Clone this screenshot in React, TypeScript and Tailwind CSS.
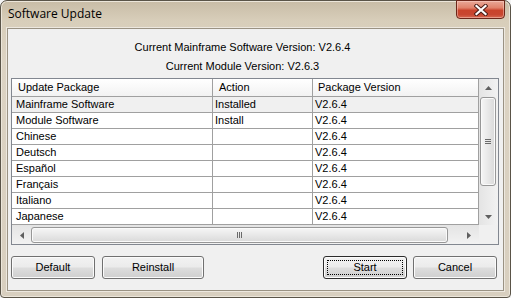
import React from "react";

const rows = [
  { name: "Mainframe Software", action: "Installed", ver: "V2.6.4", sel: true },
  { name: "Module Software", action: "Install", ver: "V2.6.4", sel: false },
  { name: "Chinese", action: "", ver: "V2.6.4", sel: false },
  { name: "Deutsch", action: "", ver: "V2.6.4", sel: false },
  { name: "Español", action: "", ver: "V2.6.4", sel: false },
  { name: "Français", action: "", ver: "V2.6.4", sel: false },
  { name: "Italiano", action: "", ver: "V2.6.4", sel: false },
  { name: "Japanese", action: "", ver: "V2.6.4", sel: false },
];

function Btn({ label, w, focused }: { label: string; w: string; focused?: boolean }) {
  return (
    <div
      className={`relative h-[23px] ${w} rounded-[3px] border ${
        focused ? "border-[#2c2c2c]" : "border-[#707070]"
      } bg-[linear-gradient(to_bottom,#f2f2f2_0%,#ebebeb_48%,#dddddd_52%,#cfcfcf_100%)] shadow-[inset_0_0_0_1px_#fbfbfb] flex items-center justify-center text-black`}
    >
      {focused && <div className="absolute inset-[3px] border border-dotted border-black" />}
      <span className="relative">{label}</span>
    </div>
  );
}

function Grip({ vertical }: { vertical: boolean }) {
  if (vertical) {
    return (
      <div className="flex flex-col gap-[1px]">
        <div className="w-[6px] h-[1px] bg-[#6a6a6a]" />
        <div className="w-[6px] h-[1px] bg-[#6a6a6a]" />
        <div className="w-[6px] h-[1px] bg-[#6a6a6a]" />
      </div>
    );
  }
  return (
    <div className="flex flex-row gap-[1px]">
      <div className="w-[1px] h-[6px] bg-[#6a6a6a]" />
      <div className="w-[1px] h-[6px] bg-[#6a6a6a]" />
      <div className="w-[1px] h-[6px] bg-[#6a6a6a]" />
    </div>
  );
}

export default function App() {
  return (
    <div className="w-[511px] h-[298px] bg-[#f4f4f4] overflow-hidden font-['Liberation_Sans',Arial,sans-serif] text-[11px] text-black">
      <div className="w-[511px] h-[298px] rounded-t-[7px] rounded-b-[4px] border border-[#5a5448] bg-[linear-gradient(to_bottom,#c8bca6_0px,#d8ceba_20px,#dcd3c3_60px,#d8cfbf_100%)] shadow-[inset_0_0_0_1px_#ece6da] flex flex-col">
        {/* Title bar */}
        <div className="h-[27px] flex items-start justify-between pl-[7px] pr-[5px]">
          <span className="mt-[5px] font-['Open_Sans',sans-serif] text-[12px] leading-[16px] text-black">
            Software Update
          </span>
          <div className="w-[49px] h-[19px] -mt-[1px] rounded-b-[4px] border border-[#6b2619] bg-[linear-gradient(to_bottom,#e8a897_0%,#e0826b_40%,#c9432b_55%,#c84630_80%,#d66a52_100%)] shadow-[inset_0_0_0_1px_rgba(255,220,210,0.45)] flex items-center justify-center">
            <svg width="14" height="12" viewBox="0 0 14 12">
              <path d="M2.5 2 L11.5 10 M11.5 2 L2.5 10" stroke="#4b1d16" strokeWidth="4.2" strokeLinecap="square" />
              <path d="M2.5 2 L11.5 10 M11.5 2 L2.5 10" stroke="#ffffff" strokeWidth="2.2" strokeLinecap="square" />
            </svg>
          </div>
        </div>

        {/* Client area */}
        <div className="mx-[6px] h-[263px] border border-[#9a9283] shadow-[0_0_0_1px_#ede8df] bg-[#f0f0f0] flex flex-col">
          <div className="pt-[9px] pr-[26px] flex flex-col items-center">
            <div className="h-[19px] leading-[19px]">Current Mainframe Software Version: V2.6.4</div>
            <div className="h-[19px] leading-[19px]">Current Module Version: V2.6.3</div>
          </div>

          {/* List */}
          <div className="mt-[2px] ml-[3px] w-[488px] h-[167px] border border-[#828790] bg-white flex flex-col">
            <div className="flex flex-row h-[146px]">
              <div className="w-[467px] flex flex-col">
                {/* header */}
                <div className="h-[18px] flex flex-row border-b border-[#a0a0a0] bg-[linear-gradient(to_bottom,#ffffff,#f2f2f2)]">
                  <div className="w-[201px] border-r border-[#a0a0a0] pl-[6px] leading-[17px]">Update Package</div>
                  <div className="w-[100px] border-r border-[#a0a0a0] pl-[6px] leading-[17px]">Action</div>
                  <div className="w-[166px] border-r border-[#a0a0a0] pl-[5px] leading-[17px]">Package Version</div>
                </div>
                {rows.map((r) => (
                  <div
                    key={r.name}
                    className={`h-[16px] flex flex-row border-b border-[#a0a0a0] ${r.sel ? "bg-[#f0f0f0]" : "bg-white"}`}
                  >
                    <div className="w-[201px] border-r border-[#a0a0a0] pl-[4px] leading-[15px]">{r.name}</div>
                    <div className="w-[100px] border-r border-[#a0a0a0] pl-[2px] leading-[15px]">{r.action}</div>
                    <div className="w-[166px] border-r border-[#a0a0a0] pl-[2px] leading-[15px]">{r.ver}</div>
                  </div>
                ))}
              </div>
              {/* vertical scrollbar */}
              <div className="w-[19px] flex flex-col bg-[linear-gradient(to_right,#e4e4e4,#f2f2f2)]">
                <div className="h-[18px] flex items-center justify-center">
                  <svg width="7" height="4" viewBox="0 0 7 4">
                    <path d="M0 4 L3.5 0 L7 4 Z" fill="#5f5f5f" />
                  </svg>
                </div>
                <div className="h-[89px] ml-[1px] mr-[2px] rounded-[3px] border border-[#979797] bg-[linear-gradient(to_right,#f6f6f6,#e8e8e8_50%,#d9d9d9)] shadow-[inset_0_0_0_1px_#fafafa] flex items-center justify-center">
                  <Grip vertical />
                </div>
                <div className="flex-1" />
                <div className="h-[17px] flex items-center justify-center">
                  <svg width="7" height="4" viewBox="0 0 7 4">
                    <path d="M0 0 L3.5 4 L7 0 Z" fill="#5f5f5f" />
                  </svg>
                </div>
              </div>
            </div>
            {/* horizontal scrollbar */}
            <div className="flex flex-row h-[19px]">
              <div className="w-[467px] flex flex-row pt-[2px] bg-[linear-gradient(to_bottom,#e4e4e4,#f2f2f2)]">
                <div className="w-[19px] h-[16px] flex items-center justify-center">
                  <svg width="4" height="7" viewBox="0 0 4 7">
                    <path d="M4 0 L0 3.5 L4 7 Z" fill="#5f5f5f" />
                  </svg>
                </div>
                <div className="w-[417px] h-[16px] rounded-[3px] border border-[#979797] bg-[linear-gradient(to_bottom,#f6f6f6,#e8e8e8_50%,#d9d9d9)] shadow-[inset_0_0_0_1px_#fafafa] flex items-center justify-center">
                  <Grip vertical={false} />
                </div>
                <div className="flex-1 h-[16px] flex items-center justify-end pr-[8px]">
                  <svg width="4" height="7" viewBox="0 0 4 7">
                    <path d="M0 0 L4 3.5 L0 7 Z" fill="#5f5f5f" />
                  </svg>
                </div>
              </div>
              <div className="w-[19px] bg-[#f0f0f0]" />
            </div>
          </div>

          {/* Buttons */}
          <div className="mt-[11px] ml-[3px] mr-[6px] flex flex-row">
            <Btn label="Default" w="w-[84px]" />
            <div className="w-[7px]" />
            <Btn label="Reinstall" w="w-[102px]" />
            <div className="flex-1" />
            <Btn label="Start" w="w-[84px]" focused />
            <div className="w-[6px]" />
            <Btn label="Cancel" w="w-[84px]" />
          </div>
        </div>
      </div>
    </div>
  );
}
